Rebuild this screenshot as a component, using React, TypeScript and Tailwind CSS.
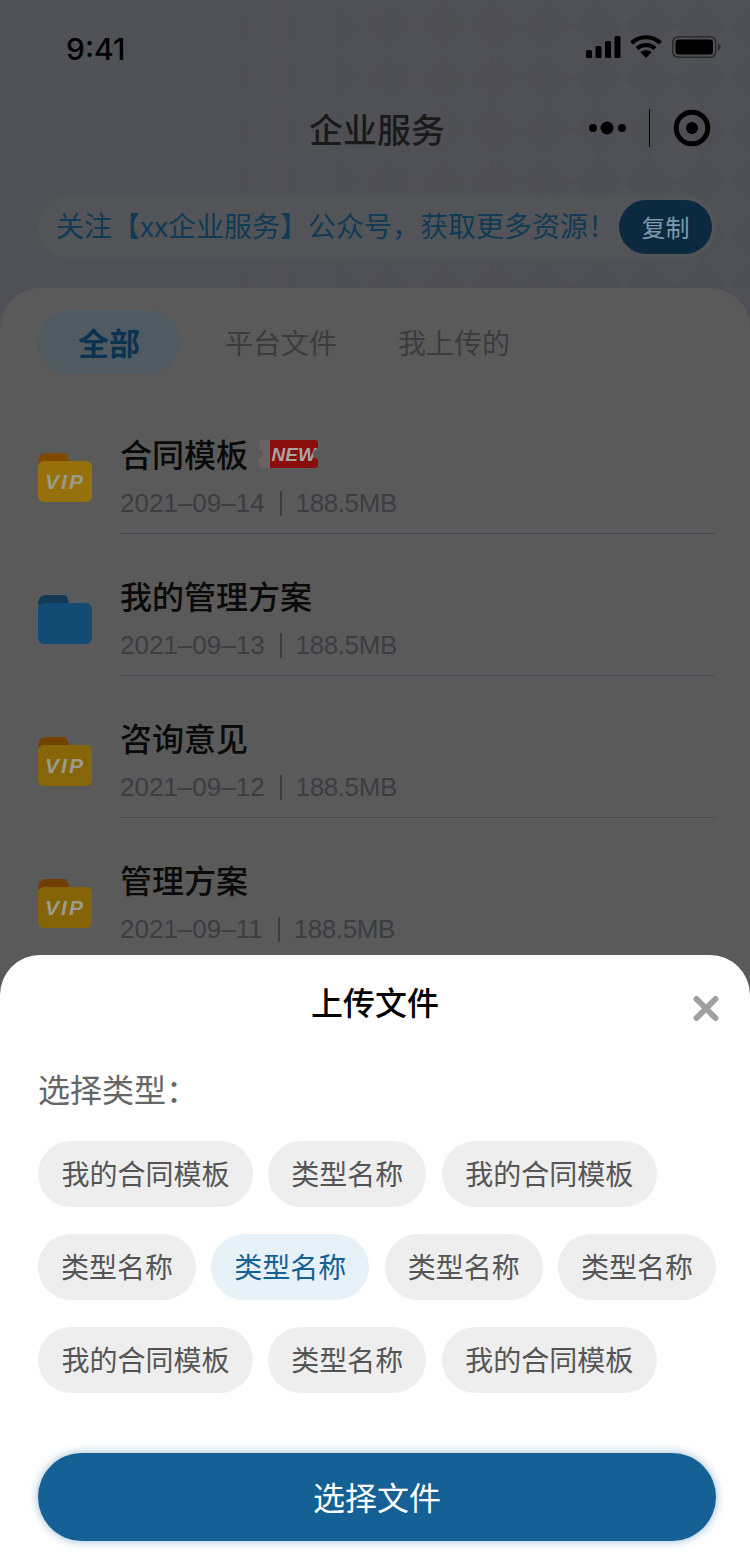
import React from "react";

const cjk = "font-['Noto_Sans_CJK_SC','Noto_Sans',sans-serif]";

const bannerText = "关注【xx企业服务】公众号\uFF0C获取更多资源\uFF01";
const typeLabel = "选择类型\uFF1A";

const files = [
  { name: "合同模板", date: "2021–09–14", type: "vip", isNew: true, front: "#96700a", back: "#804a00" },
  { name: "我的管理方案", date: "2021–09–13", type: "plain", isNew: false, front: "#144b75", back: "#103a58" },
  { name: "咨询意见", date: "2021–09–12", type: "vip", isNew: false, front: "#866608", back: "#764200" },
  { name: "管理方案", date: "2021–09–11", type: "vip", isNew: false, front: "#846407", back: "#723e00" },
];

const chipRows = [
  ["我的合同模板", "类型名称", "我的合同模板"],
  ["类型名称", "类型名称", "类型名称", "类型名称"],
  ["我的合同模板", "类型名称", "我的合同模板"],
];

const FolderIcon = ({ front, back, vip }: { front: string; back: string; vip: boolean }) => (
  <svg width="54" height="50" viewBox="0 0 54 50" className="shrink-0 mt-[61px]">
    <path d="M0 8a8 8 0 0 1 8-8h18a3 3 0 0 1 3 2l3 8H0z" fill={back} />
    <rect x="0" y="8" width="54" height="41" rx="6" fill={front} />
    {vip && (
      <text
        x="27"
        y="36"
        textAnchor="middle"
        fontSize="21"
        fontWeight="700"
        fontStyle="italic"
        fontFamily="'Liberation Sans', sans-serif"
        letterSpacing="2"
        fill="#9c9a8c"
      >
        VIP
      </text>
    )}
  </svg>
);

const NewBadge = () => (
  <svg width="59" height="28" viewBox="0 0 59 28" className="ml-[11px] -translate-y-[1px]">
    <rect x="0" y="0" width="14" height="28" rx="3" fill="#6a6264" />
    <rect x="11" y="0" width="48" height="28" rx="3" fill="#8a0e0e" />
    <rect x="11" y="0" width="4" height="28" fill="#8a0e0e" />
    <circle cx="0" cy="14" r="4" fill="#5a5a5a" />
    <text
      x="12.5"
      y="20.5"
      fontSize="19"
      fontWeight="700"
      fontStyle="italic"
      fontFamily="'Liberation Sans', sans-serif"
      fill="#a8a4a4"
    >
      NEW
    </text>
    <circle cx="59" cy="14" r="5" fill="#5a5a5a" />
  </svg>
);

const StatusIcons = () => (
  <div className="flex items-center">
    <svg width="35" height="22" viewBox="0 0 35 22" fill="#000">
      <rect x="0" y="14" width="6" height="8" rx="1.5" />
      <rect x="9.5" y="10" width="6" height="12" rx="1.5" />
      <rect x="19" y="5" width="6" height="17" rx="1.5" />
      <rect x="28.5" y="0" width="6" height="22" rx="1.5" />
    </svg>
    <svg width="32" height="23" viewBox="0 0 32 23" className="ml-[9px]" fill="none" stroke="#000" strokeWidth="4">
      <path d="M1.5 8C9.8 .2 22.2 .2 30.5 8" />
      <path d="M7 13.5c5-4.6 13-4.6 18 0" />
      <path d="M16 23l-5.6-5.8c3.2-2.6 8-2.6 11.2 0z" fill="#000" stroke="none" />
    </svg>
    <svg width="49" height="22" viewBox="0 0 49 22" className="ml-[10px]">
      <rect x="0.75" y="0.75" width="43" height="20.5" rx="5.5" fill="none" stroke="#2a2a2c" strokeWidth="1.5" />
      <rect x="3.5" y="3.5" width="37.5" height="15" rx="3" fill="#000" />
      <path d="M46 7.5c1.6.5 2.6 1.9 2.6 3.5s-1 3-2.6 3.5z" fill="#2a2a2c" />
    </svg>
  </div>
);

const Capsule = () => (
  <svg width="132" height="38" viewBox="0 0 132 38">
    <circle cx="4" cy="19" r="4" fill="#000" />
    <circle cx="18" cy="19" r="6.5" fill="#000" />
    <circle cx="33" cy="19" r="4" fill="#000" />
    <rect x="60" y="0" width="1" height="38" fill="#000" />
    <circle cx="103" cy="19" r="15.8" fill="none" stroke="#000" strokeWidth="5" />
    <circle cx="103" cy="19" r="6" fill="#000" />
  </svg>
);

// faint diamond texture behind the dimmed header
const DiamondTexture = () => (
  <svg width="750" height="288" className="absolute inset-0">
    <defs>
      <pattern id="diamonds" width="52" height="52" patternUnits="userSpaceOnUse">
        <path d="M26 0l26 26-26 26L0 26z" fill="#4e4f54" />
      </pattern>
      <linearGradient id="fade" x1="0" x2="1" y1="0" y2="0">
        <stop offset="0.3" stopColor="#fff" stopOpacity="0" />
        <stop offset="0.85" stopColor="#fff" stopOpacity="1" />
      </linearGradient>
      <mask id="fadeMask">
        <rect width="750" height="288" fill="url(#fade)" />
      </mask>
    </defs>
    <rect width="750" height="288" fill="url(#diamonds)" mask="url(#fadeMask)" />
  </svg>
);

const Chip = ({ label, active }: { label: string; active?: boolean }) => (
  <div
    className={`h-[66px] flex items-center justify-center rounded-full text-[28px] leading-none ${
      label.length === 6 ? "w-[215px]" : "w-[158px]"
    } ${active ? "bg-[#e7f1f8] text-[#156094]" : "bg-[#eeeeee] text-[#555555]"}`}
  >
    <span className="-translate-y-[1px]">{label}</span>
  </div>
);

export default function App() {
  return (
    <div className={`relative h-[1556px] w-[750px] overflow-hidden bg-[#505156] ${cjk}`}>
      <DiamondTexture />

      {/* Header */}
      <div className="relative h-[288px]">
        <div className="h-[96px] pl-[66px] pr-[29px] pt-[34px] flex items-start justify-between">
          <span className="text-[30px] leading-[30px] font-medium text-black font-['Inter',sans-serif]">9:41</span>
          <div className="pt-[1px]">
            <StatusIcons />
          </div>
        </div>
        <div className="flex items-center h-[38px] mt-[13px] pl-[309px]">
          <span className="text-[34px] leading-[38px] font-medium text-[#1a1a1a] translate-y-[1px]">企业服务</span>
          <div className="ml-[144px]">
            <Capsule />
          </div>
        </div>
        <div className="mt-[48px] ml-[38px] mr-[34px] h-[63px] rounded-full bg-[#535458] flex items-center pl-[18px] pr-[4px] justify-between">
          <span className="text-[28px] leading-none text-[#113a55] whitespace-nowrap -translate-y-[2px]">
            {bannerText}
          </span>
          <div className="shrink-0 w-[93px] h-[54px] rounded-full bg-[#0b2a40] flex items-center justify-center text-[24px] text-[#7f98a8]">
            复制
          </div>
        </div>
      </div>

      {/* File list */}
      <div className="relative h-[1268px] rounded-t-[40px] bg-[#5a5a5a] pt-[22px]">
        <div className="flex items-center pl-[38px]">
          <div className="w-[142px] h-[64px] rounded-full bg-[#4f5a61] flex items-center justify-center text-[31px] font-bold text-[#0b3350]">
            全部
          </div>
          <span className="ml-[45px] text-[28px] text-[#3a3c3f]">平台文件</span>
          <span className="ml-[61px] text-[28px] text-[#3a3c3f]">我上传的</span>
        </div>
        <div className="mt-[18px] pl-[38px] pr-[35px]">
          {files.map((f) => (
            <div key={f.name} className="flex h-[142px]">
              <FolderIcon front={f.front} back={f.back} vip={f.type === "vip"} />
              <div className="ml-[28px] flex-1 pt-[41px] border-b border-[#4b4b4f]">
                <div className="flex items-center h-[44px]">
                  <span className="text-[32px] leading-[44px] font-medium text-[#0a0a0a] -translate-y-[2px]">{f.name}</span>
                  {f.isNew && <NewBadge />}
                </div>
                <div className="mt-[8px] h-[36px] flex items-center text-[26px] leading-none text-[#3c3d42] font-['Liberation_Sans',sans-serif]">
                  <span>{f.date}</span>
                  <span className="ml-[15px] mr-[14px] w-[2px] h-[25px] bg-[#3c3d42]" />
                  <span className="tracking-[-0.4px]">188.5MB</span>
                </div>
              </div>
            </div>
          ))}
        </div>
      </div>

      {/* Upload sheet */}
      <div className="absolute left-0 right-0 bottom-0 h-[601px] bg-white rounded-t-[40px] pl-[38px] pr-[34px] pt-[24px]">
        <div className="relative h-[44px] text-center text-[32px] leading-[44px] font-medium text-black pr-[4px]">
          上传文件
          <svg width="26" height="25" viewBox="0 0 26 25" className="absolute right-[-3px] top-[17px]">
            <path d="M3.5 3l19 19M22.5 3l-19 19" stroke="#a0a0a0" strokeWidth="6" strokeLinecap="round" />
          </svg>
        </div>
        <div className="mt-[43px] h-[44px] text-[32px] leading-[44px] text-[#666666]">{typeLabel}</div>
        <div className="mt-[31px] flex flex-col gap-y-[27px]">
          {chipRows.map((row, i) => (
            <div key={i} className="flex gap-x-[15.33px]">
              {row.map((label, j) => (
                <Chip key={j} label={label} active={i === 1 && j === 1} />
              ))}
            </div>
          ))}
        </div>
        <div className="mt-[60px] h-[88px] rounded-full bg-[#156094] shadow-[0_0_10px_rgba(21,96,148,0.45)] flex items-center justify-center text-[32px] text-white">
          <span className="-translate-y-[1px]">选择文件</span>
        </div>
      </div>
    </div>
  );
}
